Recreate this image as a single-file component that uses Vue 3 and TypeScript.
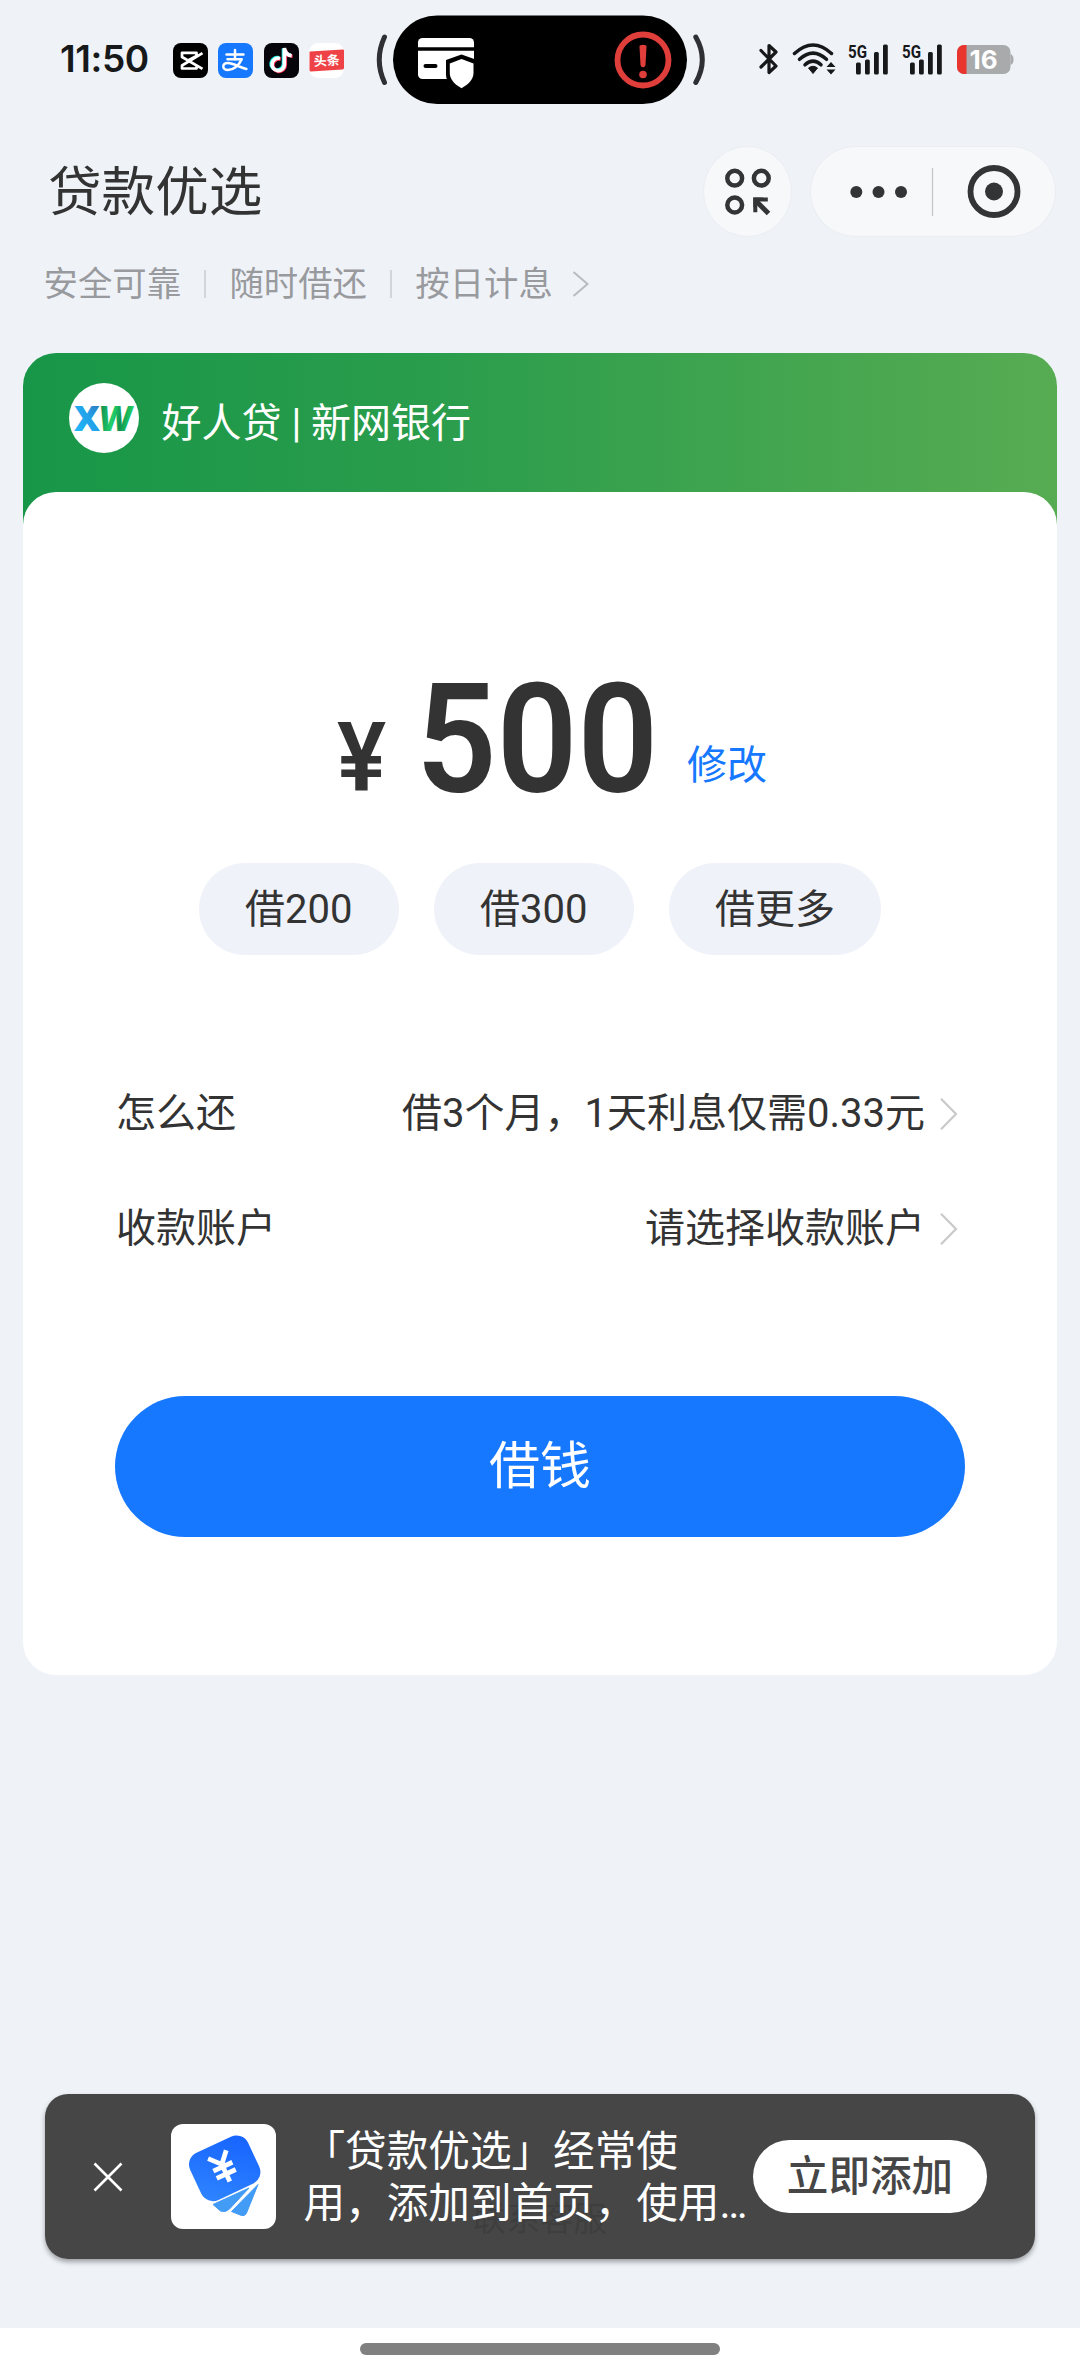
<script setup lang="ts">
interface Row {
  label: string
  value: string
}

const features: string[] = ['安全可靠', '随时借还', '按日计息']
const presets: string[] = ['借200', '借300', '借更多']
const rows: Row[] = [
  { label: '怎么还', value: '借3个月，1天利息仅需0.33元' },
  { label: '收款账户', value: '请选择收款账户' },
]
</script>

<template>
  <div class="page">
    <header class="status">
      <span class="time">11:50</span>
      <div class="apps">
        <svg width="35" height="35" viewBox="0 0 35 35">
          <rect width="35" height="35" rx="8" fill="#000" />
          <g fill="none" stroke="#fff" stroke-width="2.7" stroke-linejoin="round">
            <path d="M29.5 10.2 9 22.5v3h14.5v-3.2L9 14V9.800h14.500v3.200L15 17.500l14.500 8.300" />
          </g>
        </svg>
        <svg width="35" height="35" viewBox="0 0 35 35">
          <rect width="35" height="35" rx="8" fill="#1677ff" />
          <g fill="none" stroke="#fff" stroke-width="2.500" stroke-linecap="round">
            <path d="M8.500 11.500h17M17 7v9.500M9.500 16.300h14" />
            <path d="M23.500 16.500c-2.500 6-8 10.500-13.500 10.500-3 0-4.700-1.500-4.700-3.500s1.800-3.500 4.600-3.500c5 0 10 3.500 18.500 6" />
          </g>
        </svg>
        <svg width="35" height="35" viewBox="0 0 35 35">
          <rect width="35" height="35" rx="8" fill="#05050b" />
          <g fill="none" stroke-width="3.600">
            <path stroke="#25f4ee" d="M15 14.800a6.200 6.200 0 1 0 4.500 6V5.500c.6 4 3.500 6.300 7.300 6.500" />
            <path stroke="#fe2c55" d="M16.800 16.200a6.200 6.200 0 1 0 4.500 6V6.800c.6 4 3.500 6.300 7.300 6.500" />
            <path stroke="#fff" d="M15.900 15.500a6.200 6.200 0 1 0 4.500 6V5c.6 5 3.500 7.300 7.300 7.700" />
          </g>
        </svg>
        <svg width="35" height="35" viewBox="0 0 35 35">
          <rect width="35" height="35" rx="9" fill="#fff" />
          <path d="M1 8.500 34 6.500a1 1 0 0 1 1 1V25a1.500 1.500 0 0 1-1.400 1.500L2 28.500A1.500 1.500 0 0 1 .5 27V9.500a1 1 0 0 1 .5-1z" fill="#ee4246" />
          <text class="toutiao" x="17.800" y="22.300" text-anchor="middle" fill="#fff" transform="rotate(-3 17.500 17.500)">头条</text>
        </svg>
      </div>

      <svg class="island" width="330" height="90" viewBox="0 0 330 90">
        <g fill="none" stroke="#2e3033" stroke-width="5" stroke-linecap="round">
          <path d="M8.500 22Q-2 44.800 8.500 67.500" />
          <path d="M319.800 22Q332.800 44.800 319.800 67.500" />
        </g>
        <rect x="17" y=".5" width="294" height="88.500" rx="44.200" fill="#000" />
        <rect x="42" y="23" width="56" height="41" rx="4.500" fill="#fff" />
        <path d="M42 34h56" stroke="#000" stroke-width="3.500" />
        <path d="M49.500 51h10" stroke="#000" stroke-width="4" stroke-linecap="round" />
        <path d="M85.500 39.500 101 45v15c0 7-7 13.500-15.500 17C77 73.500 70 67 70 60V45z" fill="#000" />
        <path d="M85.500 44 97.500 48.500v9.500c0 6-4.500 11-12 15.200C78 69 73.800 64 73.800 58v-9.500z" fill="#fff" />
        <circle cx="267" cy="45" r="25.500" fill="none" stroke="#e03e3b" stroke-width="5.800" />
        <path d="M263.500 31.500q0-1.800 3.500-1.800t3.500 1.800l-1 18.500q-.2 2.300-2.500 2.300t-2.500-2.300z" fill="#e03e3b" />
        <circle cx="267" cy="59.500" r="3.800" fill="#e03e3b" />
      </svg>

      <div class="signals">
        <svg width="20" height="34" viewBox="0 0 20 34">
          <path d="M2 8.500 17 24 10 30.500V3.500L17 10 2 25" fill="none" stroke="#17181a" stroke-width="3.200" stroke-linejoin="round" stroke-linecap="round" />
        </svg>
        <svg class="wifi" width="44" height="34" viewBox="0 0 44 34">
          <g fill="none" stroke="#17181a" stroke-width="3.500" stroke-linecap="round">
            <path d="M2.500 11.500Q21 -5.500 39.500 11.500" />
            <path d="M7.500 17.300Q21 5 34.500 17.300" />
            <path d="M13 22.800Q21 15.500 29 22.800" />
          </g>
          <path d="M16.500 26Q21 22.500 25.500 26L21 31.500z" fill="#17181a" stroke="#17181a" stroke-linejoin="round" />
          <path d="M34.500 25 39 20l4.500 5zM34.500 27.500l4.500 5 4.500-5z" fill="#17181a" />
        </svg>
        <svg v-for="n in 2" :key="n" class="cell" width="43" height="34" viewBox="0 0 43 34">
          <text class="g5" x="1" y="15.500" textLength="19" lengthAdjust="spacingAndGlyphs">5G</text>
          <g fill="#17181a">
            <rect x="9" y="20.500" width="4.800" height="12" rx="1.500" />
            <rect x="18" y="17.500" width="4.800" height="15" rx="1.500" />
            <rect x="27" y="10" width="4.800" height="22.500" rx="1.500" />
            <rect x="36" y="2.500" width="4.800" height="30" rx="1.500" />
          </g>
        </svg>
        <svg class="battery" width="57" height="34" viewBox="0 0 57 34">
          <clipPath id="cellShape"><rect y="3" width="53.500" height="29" rx="7" /></clipPath>
          <g clip-path="url(#cellShape)">
            <rect y="3" width="54" height="29" fill="#a9aaac" />
            <rect y="3" width="9.500" height="29" fill="#e8352e" />
          </g>
          <path d="M53.500 12q3 1 3 5.500t-3 5.500z" fill="#a9aaac" />
          <text class="pct" x="26.500" y="27" text-anchor="middle" fill="#fff">16</text>
        </svg>
      </div>
    </header>

    <nav class="nav">
      <h1>贷款优选</h1>
      <button class="round" aria-label="应用">
        <svg width="48" height="48" viewBox="0 0 48 48">
          <g fill="none" stroke="#333436" stroke-width="4.500">
            <circle cx="10.700" cy="10.200" r="7.400" />
            <circle cx="37.300" cy="10.200" r="7.400" />
            <circle cx="10.700" cy="37" r="7.400" />
            <path d="M44.500 45.500 32 33" stroke-width="5" />
          </g>
          <path d="M29.300 29.500h14.500v4H33.300v10.700h-4z" fill="#333436" />
          <path d="M29.300 29.500h10l-10 10z" fill="#333436" />
        </svg>
      </button>
      <div class="capsule">
        <svg width="244" height="89" viewBox="0 0 244 89">
          <g fill="#333436">
            <circle cx="45.300" cy="45" r="6" />
            <circle cx="67.500" cy="45" r="6" />
            <circle cx="90" cy="45" r="6" />
            <circle cx="183" cy="44.500" r="9" />
          </g>
          <path d="M121.500 21v48" stroke="#c4c6ca" stroke-width="1.300" />
          <circle cx="183" cy="44.500" r="23.500" fill="none" stroke="#333436" stroke-width="5.800" />
        </svg>
      </div>
    </nav>

    <div class="features">
      <span v-for="f in features" :key="f" class="feature">{{ f }}</span>
      <svg width="18" height="28" viewBox="0 0 18 28">
        <path d="M1.500 2 15.500 14 1.500 26" fill="none" stroke="#b9bbc0" stroke-width="2" />
      </svg>
    </div>

    <main class="card">
      <div class="brand">
        <svg width="70" height="70" viewBox="0 0 70 70">
          <defs>
            <linearGradient id="xg" x1="0" y1="1" x2="1" y2="0">
              <stop offset="0" stop-color="#1fc0ff" />
              <stop offset=".55" stop-color="#22a0e8" />
              <stop offset="1" stop-color="#3567a8" />
            </linearGradient>
            <linearGradient id="wg" x1="0" y1="0" x2="1" y2="0">
              <stop offset="0" stop-color="#0f8c55" />
              <stop offset=".4" stop-color="#22d06a" />
              <stop offset=".65" stop-color="#11924f" />
              <stop offset="1" stop-color="#22d867" />
            </linearGradient>
          </defs>
          <circle cx="35" cy="35" r="35" fill="#fff" />
          <text class="xw" x="5" y="47.500" fill="url(#xg)" textLength="26" lengthAdjust="spacingAndGlyphs">X</text>
          <text class="xw" x="0" y="0" fill="url(#wg)" textLength="34" lengthAdjust="spacingAndGlyphs" transform="translate(28 47.500) skewX(-8)">W</text>
        </svg>
        <span>好人贷 | 新网银行</span>
      </div>

      <section class="body">
        <div class="amount">
          <span class="yen"><b>¥</b></span>
          <span class="num"><b>500</b></span>
          <a class="edit">修改</a>
        </div>
        <div class="presets">
          <button v-for="p in presets" :key="p">{{ p }}</button>
        </div>
        <div class="rows">
          <div v-for="r in rows" :key="r.label" class="row">
            <span>{{ r.label }}</span>
            <span class="value">{{ r.value }}</span>
            <svg width="18" height="34" viewBox="0 0 18 34">
              <path d="M1 1.800 16 17 1 32.200" fill="none" stroke="#c9c9c9" stroke-width="2.200" />
            </svg>
          </div>
        </div>
        <button class="submit">借钱</button>
      </section>
    </main>

    <div class="service">联系客服</div>

    <div class="toast">
      <svg class="close" width="30" height="30" viewBox="0 0 30 30">
        <path d="M1.500 1.500l27 27M28.500 1.500l-27 27" stroke="#fff" stroke-width="2.600" />
      </svg>
      <svg class="tile" width="105" height="105" viewBox="0 0 105 105">
        <defs>
          <linearGradient id="cg" x1="0" y1="1" x2="1" y2="0">
            <stop offset="0" stop-color="#2f86ff" />
            <stop offset="1" stop-color="#1662ff" />
          </linearGradient>
        </defs>
        <rect width="105" height="105" rx="12" fill="#fff" />
        <rect x="21.700" y="18.300" width="64" height="52" rx="13" fill="url(#cg)" transform="rotate(-25 53.700 44.300)" />
        <path d="M42 80.500 78 64 58.500 85q-4 4-9 2z" fill="#429bf5" stroke="#429bf5" stroke-linejoin="round" />
        <path d="M87 60.500 75.500 89q-1.500 3.500-5 2.500L60.500 87.500z" fill="#429bf5" stroke="#429bf5" stroke-linejoin="round" />
        <g transform="rotate(-25 52.500 44)" fill="none" stroke="#fff" stroke-width="4.800">
          <path d="M42.500 29 52.500 40 62.500 29M52.500 39v20M42 42.500h21M42 50.500h21" />
        </g>
      </svg>
      <p>「贷款优选」经常使<br />用，添加到首页，使用…</p>
      <button>立即添加</button>
    </div>

    <footer class="home"><i></i></footer>
  </div>
</template>

<style>
body {
  margin: 0;
}
</style>

<style scoped>
.page {
  position: relative;
  display: flex;
  flex-direction: column;
  width: 1080px;
  height: 2376px;
  overflow: hidden;
  background: #eff3f8;
  color: #333;
  font-family: Roboto, "Noto Sans CJK SC", sans-serif;
  font-size: 40px;
}
svg {
  display: block;
  flex: none;
}
button {
  border: 0;
  padding: 0;
  margin: 0;
  font: inherit;
  color: inherit;
}

.status {
  display: flex;
  align-items: flex-start;
  height: 120px;
}
.time {
  width: 112.500px;
  padding-left: 60px;
  margin-top: 35px;
  font: 600 37px/48px Inter, sans-serif;
  letter-spacing: -0.4px;
  color: #17181a;
}
.apps {
  display: flex;
  gap: 10.600px;
  margin-top: 42.500px;
}
.toutiao {
  font: 700 13px "Noto Sans CJK SC", sans-serif;
}
.island {
  margin: 15px 0 0 31.500px;
}
.signals {
  display: flex;
  margin: 42px 0 0 53.500px;
}
.wifi {
  margin-left: 13px;
}
.cell {
  margin-left: 10.500px;
}
.wifi + .cell {
  margin-left: 11px;
}
.g5 {
  font: 700 18px Roboto, sans-serif;
  fill: #17181a;
}
.battery {
  margin-left: 13.500px;
}
.pct {
  font: 700 26px Inter, sans-serif;
}

.nav {
  display: flex;
  align-items: center;
  height: 89px;
  margin-top: 27px;
  padding: 0 25px 0 48px;
}
h1 {
  flex: 1;
  margin: 3px 0 0;
  font-size: 53.600px;
  font-weight: 400;
  line-height: 88px;
}
.round,
.capsule {
  box-sizing: border-box;
  height: 89px;
  background: #f7f8fa;
  box-shadow: 0 0 0 1px #ebedf2;
}
.round {
  display: flex;
  align-items: center;
  justify-content: center;
  width: 87px;
  margin-right: 20px;
  border-radius: 50%;
}
.capsule {
  width: 244px;
  border-radius: 45px;
}

.features {
  display: flex;
  align-items: center;
  height: 40px;
  margin: 28px 0 49px 43.500px;
  font-size: 34.400px;
  line-height: 40px;
  color: #999a9e;
}
.feature {
  display: flex;
  align-items: center;
}
.feature + .feature::before {
  content: "";
  width: 1.500px;
  height: 28px;
  margin: 0 23.500px 0 23.300px;
  background: #d3d5da;
}
.features svg {
  margin-left: 19px;
}

.card {
  display: flex;
  flex-direction: column;
  height: 1322px;
  margin: 0 23px;
  border-radius: 33px;
  background: linear-gradient(90deg, #189648, #2a9d4c 40%, #57ac52) top / 100% 200px no-repeat;
}
.brand {
  display: flex;
  height: 109px;
  padding: 30px 0 0 46px;
  color: #fff;
  line-height: 82px;
}
.brand span {
  margin-left: 22.500px;
}
.body {
  display: flex;
  flex: 1;
  flex-direction: column;
  align-items: center;
  border-radius: 33px;
  background: #fff;
}

.amount {
  display: flex;
  align-items: baseline;
  align-self: stretch;
  height: 180px;
  margin-top: 158px;
  padding-left: 314px;
  line-height: 180px;
}
.amount b {
  display: inline-block;
  font-weight: 600;
  transform-origin: 0 50%;
}
.yen {
  width: 79px;
  font-size: 96px;
}
.yen b {
  transform: translateY(-1px) scaleX(0.960);
}
.num {
  width: 271px;
  font-size: 152px;
}
.num b {
  transform: scaleX(0.930);
}
.edit {
  color: #1677ff;
  transform: translateY(-13px);
}

.presets {
  display: flex;
  gap: 35px;
  margin-top: 33px;
}
.presets button {
  height: 92px;
  padding: 1px 46.300px 0;
  border-radius: 46px;
  background: #eff2f8;
  line-height: 91px;
}

.rows {
  align-self: stretch;
  padding: 101px 99px 0 93px;
  line-height: 50px;
}
.row {
  display: flex;
  align-items: center;
  height: 115px;
}
.value {
  margin-left: auto;
  margin-right: 15px;
}
.submit {
  width: 850px;
  height: 141px;
  margin-top: 110px;
  border-radius: 71px;
  background: #1677ff;
  color: #fff;
  font-size: 51px;
  line-height: 142px;
}

.service {
  margin: 525px auto 0;
  font-size: 33.600px;
  line-height: 40px;
  color: #999;
}
.toast {
  position: absolute;
  left: 45px;
  top: 2094px;
  display: flex;
  align-items: center;
  box-sizing: border-box;
  width: 990px;
  height: 165px;
  padding-left: 48px;
  border-radius: 23px;
  background: rgba(53, 53, 53, 0.91);
  box-shadow: 0 3px 5px rgba(0, 0, 0, 0.35);
  color: #fff;
  font-size: 41.600px;
}
.tile {
  margin-left: 48px;
}
.toast p {
  flex: none;
  width: 449.500px;
  margin: 2px 0 0 27.500px;
  line-height: 51.500px;
  white-space: nowrap;
}
.toast button {
  width: 234px;
  height: 73px;
  border-radius: 37px;
  background: #fff;
  color: #464646;
  font-weight: 500;
  line-height: 74px;
}

.home {
  display: flex;
  justify-content: center;
  height: 48px;
  margin-top: auto;
  background: #fff;
}
.home i {
  width: 360px;
  height: 12px;
  margin-top: 15px;
  border-radius: 6px;
  background: #808080;
}
.xw {
  font: 800 35px "Open Sans", sans-serif;
}
</style>
